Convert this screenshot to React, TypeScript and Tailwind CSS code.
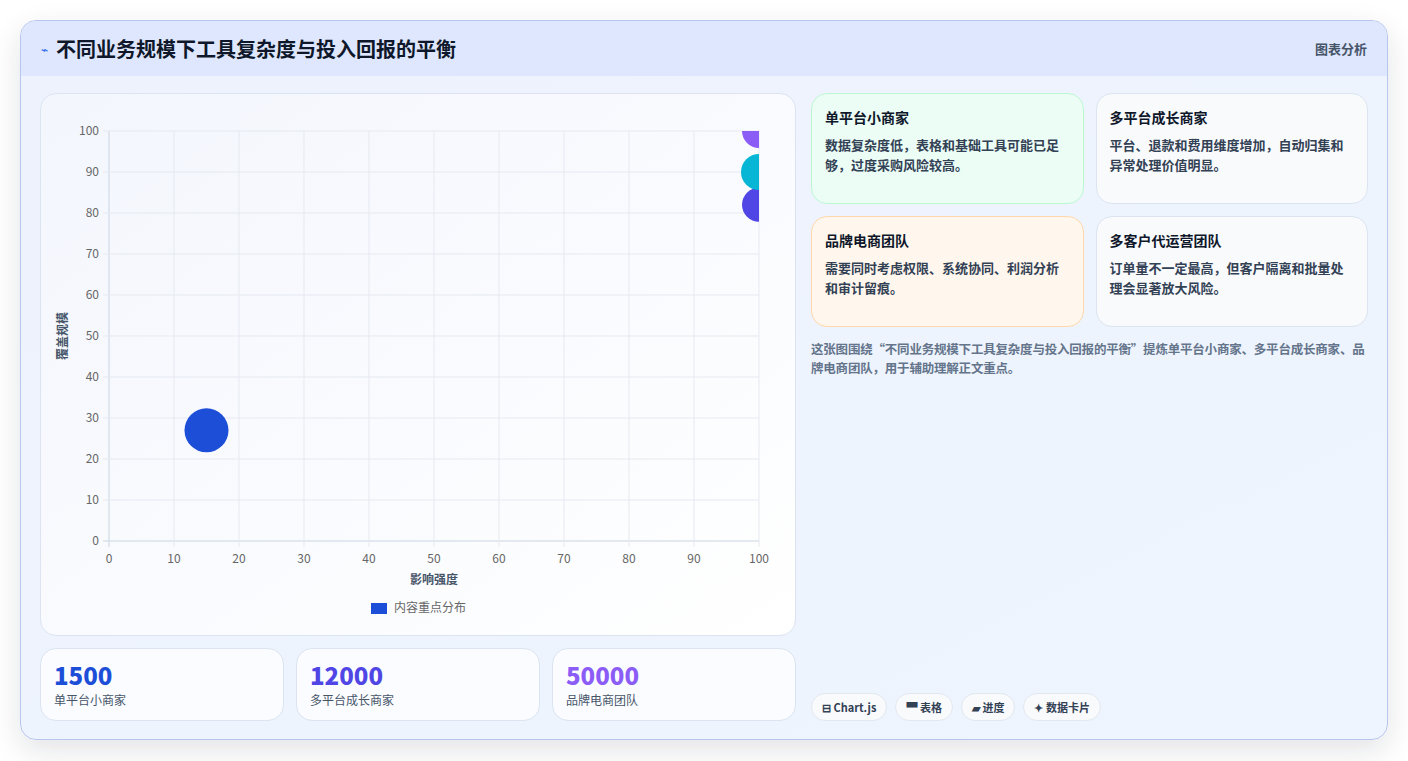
const FONT = { fontFamily: '"Noto Sans CJK SC", "Liberation Sans", sans-serif' }

const cards = [
  { t: '单平台小商家', d: '数据复杂度低，表格和基础工具可能已足够，过度采购风险较高。', c: 'bg-[#ecfdf5] border-[#bbf7d0]' },
  { t: '多平台成长商家', d: '平台、退款和费用维度增加，自动归集和异常处理价值明显。', c: 'bg-[#f8fafc] border-[#dbe4f0]' },
  { t: '品牌电商团队', d: '需要同时考虑权限、系统协同、利润分析和审计留痕。', c: 'bg-[#fff7ed] border-[#fed7aa]' },
  { t: '多客户代运营团队', d: '订单量不一定最高，但客户隔离和批量处理会显著放大风险。', c: 'bg-[#f8fafc] border-[#dbe4f0]' },
]

const stats = [
  { v: '1500', l: '单平台小商家', c: 'text-[#1d4ed8]' },
  { v: '12000', l: '多平台成长商家', c: 'text-[#4f46e5]' },
  { v: '50000', l: '品牌电商团队', c: 'text-[#8b5cf6]' },
]

function Chart() {
  const x0 = 68, x1 = 718, y0 = 447, y1 = 37
  const px = (v: number) => x0 + ((x1 - x0) * v) / 100
  const py = (v: number) => y0 - ((y0 - y1) * v) / 100
  const ticks = [0, 10, 20, 30, 40, 50, 60, 70, 80, 90, 100]
  return (
    <svg width="755" height="542" className="block" style={FONT}>
      <defs>
        <clipPath id="plot"><rect x={x0} y={y1} width={x1 - x0} height={y0 - y1} /></clipPath>
      </defs>
      {ticks.map(t => (
        <g key={t}>
          <line x1={px(t)} x2={px(t)} y1={y1} y2={y0 + 6} stroke={t === 0 ? '#cbd5e1' : '#e5e9f0'} />
          <line x1={x0 - 6} x2={x1} y1={py(t)} y2={py(t)} stroke={t === 0 ? '#cbd5e1' : '#e5e9f0'} />
          <text x={px(t)} y={y0 + 22} fontSize="12" fill="#666" textAnchor="middle">{t}</text>
          <text x={x0 - 10} y={py(t) + 4} fontSize="12" fill="#666" textAnchor="end">{t}</text>
        </g>
      ))}
      <g clipPath="url(#plot)">
        <circle cx={px(15)} cy={py(27)} r="22" fill="#1d4ed8" />
        <circle cx={px(100)} cy={py(100)} r="17" fill="#8b5cf6" />
        <circle cx={px(100)} cy={py(82)} r="17" fill="#4f46e5" />
        <circle cx={px(100)} cy={py(90)} r="18" fill="#06b6d4" />
      </g>
      <text x={(x0 + x1) / 2} y={490} fontSize="12" fontWeight="700" fill="#475569" textAnchor="middle">影响强度</text>
      <text transform={`translate(26 ${(y0 + y1) / 2}) rotate(-90)`} fontSize="12" fontWeight="700" fill="#475569" textAnchor="middle">覆盖规模</text>
      <rect x="330" y="509" width="16" height="11" fill="#1d4ed8" />
      <text x="353" y="518" fontSize="12" fill="#666">内容重点分布</text>
    </svg>
  )
}

export default function App() {
  return (
    <div className="w-[1408px] h-[761px] bg-white p-5" style={FONT}>
      <div className="h-[720px] rounded-2xl border border-[#b8c6ee] bg-gradient-to-br from-[#eef2fd] to-[#eef5fe] overflow-hidden shadow-[0_10px_30px_rgba(15,23,42,0.12)]">
        <div className="h-[55px] bg-[#dee7fd] flex items-center justify-between px-5">
          <div className="flex items-center gap-2">
            <span className="text-[#2563eb] text-xs">⌁</span>
            <h1 className="text-[20px] font-bold text-[#0f172a]">不同业务规模下工具复杂度与投入回报的平衡</h1>
          </div>
          <span className="text-[13px] font-semibold text-[#475569]">图表分析</span>
        </div>
        <div className="flex gap-[15px] px-[19px] pt-[17px]">
          <div className="w-[756px] flex flex-col gap-3">
            <div className="h-[543px] rounded-2xl border border-[#dbe4f0] bg-gradient-to-br from-[#f3f6fd] to-white overflow-hidden">
              <Chart />
            </div>
            <div className="grid grid-cols-3 gap-3">
              {stats.map(s => (
                <div key={s.v} className="h-[73px] rounded-2xl border border-[#dbe4f0] bg-[#fafcff] px-[13px] pt-[11px]">
                  <div className={`text-[24px] leading-[30px] font-extrabold ${s.c}`}>{s.v}</div>
                  <div className="text-xs text-[#475569] mt-0.5">{s.l}</div>
                </div>
              ))}
            </div>
          </div>
          <div className="flex-1 flex flex-col h-[628px]">
            <div className="grid grid-cols-2 gap-3">
              {cards.map(c => (
                <div key={c.t} className={`h-[111px] rounded-2xl border px-[13px] pt-[13px] ${c.c}`}>
                  <div className="text-sm font-bold text-[#0f172a]">{c.t}</div>
                  <div className="text-[13px] leading-[20px] font-semibold text-[#334155] mt-2">{c.d}</div>
                </div>
              ))}
            </div>
            <p className="mt-3 text-[12.5px] tracking-[-0.2px] leading-[19px] font-semibold text-[#64748b]">这张图围绕“不同业务规模下工具复杂度与投入回报的平衡”提炼单平台小商家、多平台成长商家、品牌电商团队，用于辅助理解正文重点。</p>
            <div className="mt-auto flex gap-2">
              {['⊟ Chart.js', '▀ 表格', '▰ 进度', '✦ 数据卡片'].map(t => (
                <span key={t} className="h-[28px] px-[10px] rounded-full border border-[#e2e8f0] bg-[#f8fafc] flex items-center text-[11px] font-bold text-[#334155]">{t}</span>
              ))}
            </div>
          </div>
        </div>
      </div>
    </div>
  )
}
